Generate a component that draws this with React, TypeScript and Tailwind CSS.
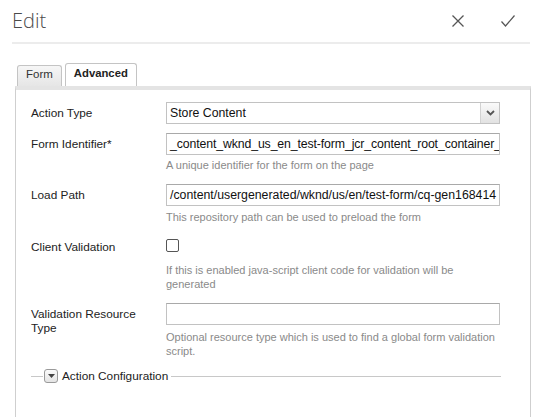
const font = { fontFamily: "'Liberation Sans', Arial, sans-serif" }

function Label({ children }: { children: React.ReactNode }) {
  return <div className="pt-[4px] text-[11.8px] leading-[14px] text-[#222]">{children}</div>
}

function Help({ children }: { children: React.ReactNode }) {
  return <div className="whitespace-nowrap text-[11px] leading-[14px] text-[#8a8a8a]">{children}</div>
}

function TextField({ value, tight }: { value?: string; tight?: boolean }) {
  return (
    <div
      className={
        tight
          ? "h-[22px] border border-[#c2c2c2] border-t-[#a9a9a9] bg-white px-[3px] text-[12.3px] tracking-[-0.12px] leading-[20px] text-[#111] overflow-hidden whitespace-nowrap"
          : "h-[22px] border border-[#c2c2c2] border-t-[#a9a9a9] bg-white px-[3px] text-[12.3px] leading-[20px] text-[#111] overflow-hidden whitespace-nowrap"
      }
    >
      {value}
    </div>
  )
}

export default function App() {
  return (
    <div className="w-[542px] h-[417px] bg-white overflow-hidden" style={font}>
      {/* header */}
      <div className="mx-3 flex h-[44px] items-center border-b-2 border-[#ececec]">
        <h1
          className="text-[20px] font-light text-[#4a4a4a]"
          style={{ fontFamily: "'Open Sans', sans-serif" }}
        >
          Edit
        </h1>
        <div className="ml-auto flex items-center gap-[38px] pr-[15px]">
          <svg width="12" height="12" viewBox="0 0 12 12" className="translate-x-[1px]">
            <path d="M0.5 0.5 L11.5 11.5 M11.5 0.5 L0.5 11.5" stroke="#555" strokeWidth="1.3" fill="none" />
          </svg>
          <svg width="14" height="12" viewBox="0 0 14 12">
            <path d="M0.5 6.5 L4.5 11 L13.5 0.5" stroke="#555" strokeWidth="1.2" fill="none" />
          </svg>
        </div>
      </div>

      {/* tabs */}
      <div className="ml-[15px] mr-[11px] mt-[19px]">
        <div className="flex items-end gap-[3px] pl-[2px]">
          <div className="h-[21px] rounded-t-[3px] border border-b-0 border-[#c4c4c4] bg-gradient-to-b from-[#f6f6f6] to-[#e6e6e6] px-[8px] text-[11.5px] leading-[17px] text-[#333]">
            Form
          </div>
          <div className="h-[23px] rounded-t-[3px] border border-b-0 border-[#c4c4c4] bg-white px-[8px] text-[11.3px] font-bold leading-[19px] text-[#222]">
            Advanced
          </div>
        </div>
        <div className="h-[400px] border border-[#cfcfcf] border-t-[4px] border-t-[#e4e4e4] bg-white">
          <div className="grid grid-cols-[135px_334px] pl-[15px] pt-[12px]">
            <Label>Action Type</Label>
            <div className="flex h-[22px] border border-[#c2c2c2] bg-white">
              <div className="flex-1 px-[3px] text-[12.3px] leading-[20px] text-[#111]">Store Content</div>
              <div className="flex w-[19px] items-center justify-center border-l border-[#d2d2d2] bg-gradient-to-b from-[#fafafa] to-[#e2e2e2]">
                <svg width="9" height="6" viewBox="0 0 9 6">
                  <path d="M1 1 L4.5 4.5 L8 1" fill="none" stroke="#555" strokeWidth="1.8" />
                </svg>
              </div>
            </div>

            <div className="mt-[9px]"><Label>Form Identifier*</Label></div>
            <div className="mt-[9px]">
              <TextField tight value="_content_wknd_us_en_test-form_jcr_content_root_container_" />
              <div className="mt-[3px]"><Help>A unique identifier for the form on the page</Help></div>
            </div>

            <div className="mt-[12px]"><Label>Load Path</Label></div>
            <div className="mt-[12px]">
              <TextField value="/content/usergenerated/wknd/us/en/test-form/cq-gen168414" />
              <div className="mt-[4px]"><Help>This repository path can be used to preload the form</Help></div>
            </div>

            <div className="mt-[12px]"><Label>Client Validation</Label></div>
            <div className="mt-[12px]">
              <div className="mt-[3px] h-[13px] w-[13px] rounded-[2px] border border-[#555] bg-white" />
              <div className="mt-[11px]">
                <Help>
                  If this is enabled java-script client code for validation will be
                  <br />
                  generated
                </Help>
              </div>
            </div>

            <div className="mt-[12px]"><Label>Validation Resource<br />Type</Label></div>
            <div className="mt-[12px]">
              <TextField />
              <div className="mt-[5px]">
                <Help>
                  Optional resource type which is used to find a global form validation
                  <br />
                  script.
                </Help>
              </div>
            </div>
          </div>

          <div className="ml-[15px] mt-[11px] flex w-[470px] items-center">
            <div className="w-[12px] border-t border-[#c8c8c8]" />
            <div className="mx-[1px] flex h-[14px] w-[14px] items-center justify-center rounded-[3px] border border-[#9a9a9a] bg-gradient-to-b from-[#fbfbfb] to-[#e4e4e4]">
              <svg width="7" height="4" viewBox="0 0 7 4">
                <path d="M0 0 H7 L3.5 4 Z" fill="#444" />
              </svg>
            </div>
            <span className="px-[3px] text-[11.8px] leading-[14px] text-[#222]">Action Configuration</span>
            <div className="flex-1 border-t border-[#c8c8c8]" />
          </div>
        </div>
      </div>
    </div>
  )
}
